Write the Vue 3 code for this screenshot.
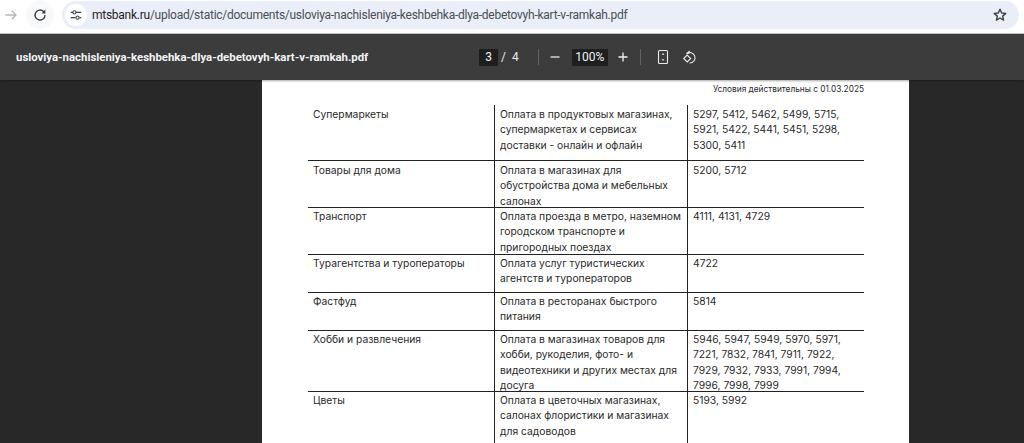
<script setup>
const rows = [
  { name: 'Супермаркеты', lines: ['Оплата в продуктовых магазинах,', 'супермаркетах и сервисах', 'доставки - онлайн и офлайн'], codes: ['5297, 5412, 5462, 5499, 5715,', '5921, 5422, 5441, 5451, 5298,', '5300, 5411'], h: 56 },
  { name: 'Товары для дома', lines: ['Оплата в магазинах для', 'обустройства дома и мебельных', 'салонах'], codes: ['5200, 5712'], h: 47 },
  { name: 'Транспорт', lines: ['Оплата проезда в метро, наземном', 'городском транспорте и', 'пригородных поездах'], codes: ['4111, 4131, 4729'], h: 47 },
  { name: 'Турагентства и туроператоры', lines: ['Оплата услуг туристических', 'агентств и туроператоров'], codes: ['4722'], h: 38 },
  { name: 'Фастфуд', lines: ['Оплата в ресторанах быстрого', 'питания'], codes: ['5814'], h: 38 },
  { name: 'Хобби и развлечения', lines: ['Оплата в магазинах товаров для', 'хобби, рукоделия, фото- и', 'видеотехники и других местах для', 'досуга'], codes: ['5946, 5947, 5949, 5970, 5971,', '7221, 7832, 7841, 7911, 7922,', '7929, 7932, 7933, 7991, 7994,', '7996, 7998, 7999'], h: 61 },
  { name: 'Цветы', lines: ['Оплата в цветочных магазинах,', 'салонах флористики и магазинах', 'для садоводов'], codes: ['5193, 5992'], h: 52 },
]
</script>

<template>
  <div class="window">
    <header class="chrome">
      <svg class="nav-icon forward" viewBox="0 0 16 16" width="16" height="16">
        <path d="M2.500 8h10.500M8.800 3.800 13 8l-4.200 4.200" fill="none" stroke="#b4b6b9" stroke-width="1.300" />
      </svg>
      <div class="reload-wrap">
        <svg viewBox="0 0 16 16" width="16" height="16">
          <path d="M13 8a5 5 0 1 1-1.500-3.550L13 6" fill="none" stroke="#3c4043" stroke-width="1.400" />
          <path d="M13.300 2.600v3.800H9.500z" fill="#3c4043" />
        </svg>
      </div>
      <div class="omnibox">
        <div class="site-chip">
          <svg viewBox="0 0 16 16" width="14" height="14">
            <path d="M2 5h2.500M2 11h5.500" fill="none" stroke="#3c4043" stroke-width="1.400" />
            <path d="M8 5h6M12 11h2" fill="none" stroke="#3c4043" stroke-width="1.400" />
            <circle cx="9.800" cy="11" r="1.800" fill="none" stroke="#3c4043" stroke-width="1.200" />
            <circle cx="6.200" cy="5" r="1.800" fill="none" stroke="#3c4043" stroke-width="1.200" />
          </svg>
        </div>
        <div class="url"><span class="host">mtsbank.ru</span>/upload/static/documents/usloviya-nachisleniya-keshbehka-dlya-debetovyh-kart-v-ramkah.pdf</div>
        <svg class="star" viewBox="0 0 16 16" width="16" height="16">
          <path d="M8 2.200 9.700 6l4.100.4-3.100 2.700.9 4L8 11l-3.600 2.100.9-4-3.100-2.700L6.300 6z" fill="none" stroke="#3c4043" stroke-width="1.400" stroke-linejoin="round" />
        </svg>
      </div>
    </header>

    <div class="pdf-bar">
      <div class="file-name">usloviya-nachisleniya-keshbehka-dlya-debetovyh-kart-v-ramkah.pdf</div>
      <div class="controls">
        <span class="field page-field">3</span>
        <span class="sep-text">/</span>
        <span class="total">4</span>
        <span class="divider first"></span>
        <svg viewBox="0 0 12 12" width="12" height="12" class="minus"><path d="M1.500 6h9" stroke="#e8eaed" stroke-width="1.300" /></svg>
        <span class="field zoom-field">100%</span>
        <svg viewBox="0 0 12 12" width="12" height="12" class="plus"><path d="M1.500 6h9M6 1.500v9" stroke="#f1f3f4" stroke-width="1.300" /></svg>
        <span class="divider second"></span>
        <svg viewBox="0 0 12 16" width="12" height="16" class="fit">
          <rect x="1.500" y="1.500" width="9" height="13" rx="1" fill="none" stroke="#e8eaed" stroke-width="1.100" />
          <path d="M6 4 4.700 5.800h2.600zM6 12l-1.300-1.800h2.600z" fill="#e8eaed" />
        </svg>
        <svg viewBox="0 0 16 16" width="16" height="16" class="rotate">
          <path d="M4.500 4.500A5.300 5.300 0 1 1 7.500 14" fill="none" stroke="#e8eaed" stroke-width="1.100" />
          <path d="M7.600 1.200v3.600H4z" fill="#e8eaed" />
          <path d="M5.200 6 1.700 9.500l3.500 3.500 3.500-3.500z" fill="none" stroke="#e8eaed" stroke-width="1.100" />
        </svg>
      </div>
    </div>

    <main class="viewer">
      <section class="page">
        <div class="validity">Условия действительны с 01.03.2025</div>
        <div class="table">
          <div v-for="(row, i) in rows" :key="row.name" class="row" :class="{ last: i === rows.length - 1 }" :style="{ height: row.h + 'px' }">
            <div class="cell name">{{ row.name }}</div>
            <div class="cell desc"><div v-for="l in row.lines" :key="l">{{ l }}</div></div>
            <div class="cell codes"><div v-for="c in row.codes" :key="c">{{ c }}</div></div>
          </div>
        </div>
      </section>
    </main>
  </div>
</template>

<style scoped>
.window { width: 1024px; height: 443px; overflow: hidden; display: flex; flex-direction: column; font-family: "Liberation Sans", Arial, sans-serif; background: #282828; }

.chrome { height: 34px; flex: none; background: #fff; display: flex; align-items: flex-start; box-sizing: border-box; border-bottom: 1px solid #c4c7c5; }
.nav-icon { margin: 7px 0 0 3px; flex: none; }
.reload-wrap { width: 28px; height: 28px; border-radius: 50%; background: #f8f9fa; margin: 1px 0 0 7px; display: flex; align-items: center; justify-content: center; flex: none; }
.omnibox { margin: 1px 0 0 8px; width: 957px; height: 28px; background: #e9eef8; border-radius: 14px; display: flex; align-items: center; flex: none; position: relative; }
.site-chip { width: 22px; height: 22px; border-radius: 50%; background: #fff; margin-left: 3px; display: flex; align-items: center; justify-content: center; flex: none; }
.url { font-family: Roboto, "Liberation Sans", sans-serif; font-size: 12px; letter-spacing: -0.26px; color: #4a4f55; margin-left: 5px; white-space: nowrap; }
.host { color: #1f1f1f; }
.star { position: absolute; left: 930px; top: 6px; }

.pdf-bar { height: 46px; flex: none; background: #3c3c3c; display: flex; align-items: center; position: relative; box-shadow: 0 1px 2px rgba(0,0,0,.35); z-index: 1; }
.file-name { margin-left: 16px; font-family: Roboto, "Liberation Sans", sans-serif; font-size: 11.400px; font-weight: 700; color: #f1f3f4; white-space: nowrap; }
.controls { position: absolute; left: 479px; top: 0; height: 46px; display: flex; align-items: center; color: #e8eaed; font-family: Roboto, sans-serif; font-size: 12px; }
.field { background: #1f1f1f; height: 17px; display: flex; align-items: center; justify-content: center; color: #f1f3f4; }
.page-field { width: 19px; }
.sep-text { margin-left: 3px; }
.total { margin-left: 6px; }
.divider { width: 1px; height: 16px; background: #5f6368; flex: none; }
.divider.first { margin-left: 19px; }
.minus { margin-left: 10px; }
.zoom-field { width: 36px; margin-left: 11px; }
.plus { margin-left: 9px; }
.divider.second { margin-left: 11px; }
.fit { margin-left: 16px; }
.rotate { margin-left: 13px; }

.viewer { flex: 1; display: flex; justify-content: flex-start; overflow: hidden; }
.page { margin-left: 262px; width: 647px; height: 100%; background: #fff; box-sizing: border-box; padding: 0 45px 0 46px; color: #2a2a2a; font-family: Inter, "Liberation Sans", sans-serif; }
.validity { font-size: 8.300px; text-align: right; height: 25px; line-height: 18px; }
.table { display: flex; flex-direction: column; }
.row { display: grid; grid-template-columns: 187px 193px 176px; border-bottom: 1px solid #222; box-sizing: border-box; font-size: 10.300px; line-height: 15.400px; }
.row.last { border-bottom: none; }
.row:nth-child(-n+2) .cell { padding-top: 2px; }
.cell { padding: 1px 0 0 5px; box-sizing: border-box; white-space: nowrap; }
.name { border-right: 1px solid #222; }
.desc { border-right: 1px solid #222; }
</style>
